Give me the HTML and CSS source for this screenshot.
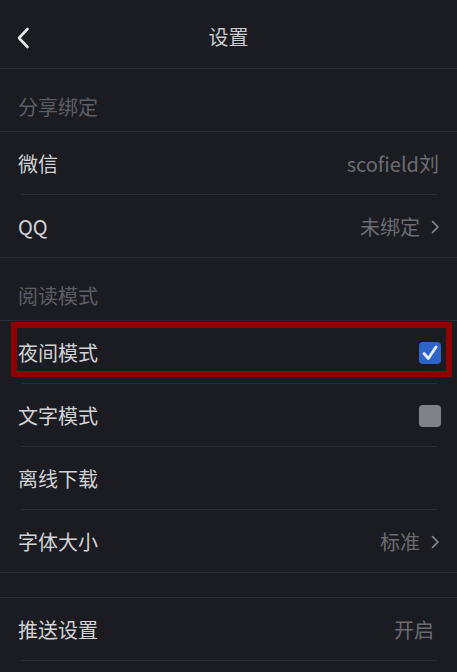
FILE: index.html
```html
<!DOCTYPE html>
<html lang="zh">
<head>
<meta charset="utf-8">
<title>设置</title>
<link rel="stylesheet" href="styles.css">
</head>
<body>
<div class="page">
  <header class="nav">
    <span class="back">
      <svg width="14" height="22" viewBox="0 0 14 22"><path d="M11.5 2 L3 11 L11.5 20" fill="none" stroke="#e6e6e8" stroke-width="2.6" stroke-linecap="round" stroke-linejoin="round"/></svg>
    </span>
    <h1 class="title">设置</h1>
  </header>

  <div class="section-head">分享绑定</div>
  <div class="row">
    <span class="label">微信</span>
    <span class="value">scofield刘</span>
  </div>
  <div class="row last">
    <span class="label">QQ</span>
    <span class="value">未绑定<svg class="chev" width="9" height="14" viewBox="0 0 9 14"><path d="M1.5 1.5 L7 7 L1.5 12.5" fill="none" stroke="#8a8b90" stroke-width="1.6" stroke-linecap="round" stroke-linejoin="round"/></svg></span>
  </div>

  <div class="section-head">阅读模式</div>
  <div class="row">
    <span class="label">夜间模式</span>
    <span class="check on">
      <svg width="22" height="22" viewBox="0 0 22 22"><path d="M5 11.5 L9.3 16.5 L17 5" fill="none" stroke="#e8ecf4" stroke-width="2.8" stroke-linecap="round" stroke-linejoin="round"/></svg>
    </span>
    <span class="highlight"></span>
  </div>
  <div class="row">
    <span class="label">文字模式</span>
    <span class="check off"></span>
  </div>
  <div class="row">
    <span class="label">离线下载</span>
  </div>
  <div class="row last">
    <span class="label">字体大小</span>
    <span class="value">标准<svg class="chev" width="9" height="14" viewBox="0 0 9 14"><path d="M1.5 1.5 L7 7 L1.5 12.5" fill="none" stroke="#8a8b90" stroke-width="1.6" stroke-linecap="round" stroke-linejoin="round"/></svg></span>
  </div>

  <div class="spacer"></div>
  <div class="row">
    <span class="label">推送设置</span>
    <span class="value push">开启</span>
  </div>
</div>
</body>
</html>
```

FILE: styles.css
```css
* { box-sizing: border-box; }
html, body {
  margin: 0;
  padding: 0;
  background: #1b1c21;
}
body {
  font-family: "Noto Sans CJK SC", "Noto Sans", sans-serif;
  color: #d2d3d6;
  width: 457px;
  height: 672px;
  overflow: hidden;
}
.page {
  display: flex;
  flex-direction: column;
}
.nav {
  height: 69px;
  border-bottom: 1px solid #2b2c31;
  display: flex;
  align-items: center;
  justify-content: center;
  position: relative;
}
.back {
  position: absolute;
  left: 16px;
  top: 27px;
  display: flex;
}
.title {
  margin: 6px 0 0 0;
  font-size: 20px;
  font-weight: 400;
  color: #cacbce;
  line-height: 1;
}
.section-head {
  height: 63px;
  border-bottom: 1px solid #2b2c31;
  display: flex;
  align-items: center;
  padding: 13px 0 0 18px;
  font-size: 20px;
  color: #5d5e63;
}
.row {
  height: 63px;
  padding: 0 18px;
  display: flex;
  align-items: center;
  justify-content: space-between;
  position: relative;
  font-size: 20px;
}
.row::after {
  content: "";
  position: absolute;
  left: 21px;
  right: 20px;
  bottom: 0;
  height: 1px;
  background: #2b2c31;
}
.row.last::after {
  left: 0;
  right: 0;
}
.label {
  color: #d2d3d6;
}
.value {
  color: #6b6c71;
  display: flex;
  align-items: center;
}
.row.last .value {
  margin-right: -1px;
}
.value.push {
  margin-right: 5px;
}
.chev {
  margin-left: 11px;
  margin-top: 1px;
}
.check {
  width: 22px;
  height: 22px;
  border-radius: 4px;
  display: flex;
  margin-right: -2px;
}
.check.on {
  background: #2c64c9;
}
.check.off {
  background: #818287;
}
.highlight {
  position: absolute;
  left: 11px;
  right: 5px;
  top: 1px;
  height: 55px;
  border: 6px solid #900000;
  pointer-events: none;
}
.spacer {
  height: 25px;
  border-bottom: 1px solid #2b2c31;
}
```
